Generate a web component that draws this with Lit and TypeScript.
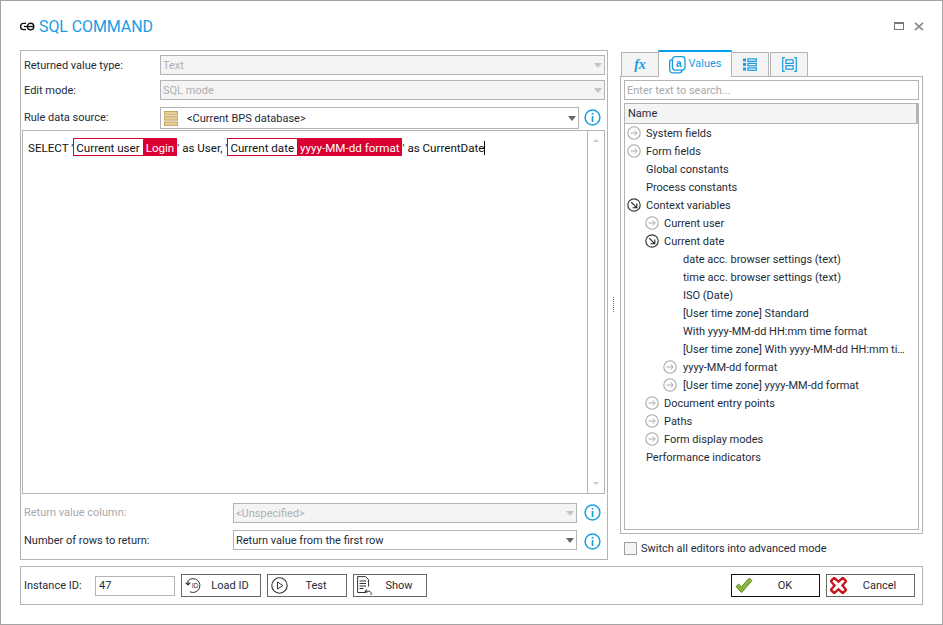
import { LitElement, css, html, svg } from "lit";
import { customElement } from "lit/decorators.js";

type TreeRow = { label: string; level: number; icon?: "closed" | "open" };

const TREE: TreeRow[] = [
  { label: "System fields", level: 0, icon: "closed" },
  { label: "Form fields", level: 0, icon: "closed" },
  { label: "Global constants", level: 0 },
  { label: "Process constants", level: 0 },
  { label: "Context variables", level: 0, icon: "open" },
  { label: "Current user", level: 1, icon: "closed" },
  { label: "Current date", level: 1, icon: "open" },
  { label: "date acc. browser settings (text)", level: 2 },
  { label: "time acc. browser settings (text)", level: 2 },
  { label: "ISO (Date)", level: 2 },
  { label: "[User time zone] Standard", level: 2 },
  { label: "With yyyy-MM-dd HH:mm time format", level: 2 },
  { label: "[User time zone] With yyyy-MM-dd HH:mm time format", level: 2 },
  { label: "yyyy-MM-dd format", level: 2, icon: "closed" },
  { label: "[User time zone] yyyy-MM-dd format", level: 2, icon: "closed" },
  { label: "Document entry points", level: 1, icon: "closed" },
  { label: "Paths", level: 1, icon: "closed" },
  { label: "Form display modes", level: 1, icon: "closed" },
  { label: "Performance indicators", level: 0 },
];

const infoIcon = html`<svg class="info" width="17" height="17" viewBox="0 0 17 17">
  <circle cx="8.5" cy="8.5" r="7.4" fill="none" stroke="#1ba1e2" stroke-width="1.5" />
  <rect x="7.7" y="7" width="1.7" height="6" fill="#1ba1e2" />
  <rect x="7.7" y="3.9" width="1.7" height="1.7" fill="#1ba1e2" />
</svg>`;

const treeClosed = html`<svg width="14" height="14" viewBox="0 0 14 14">
  <circle cx="7" cy="7" r="6.2" fill="none" stroke="#a9a9a9" stroke-width="1.1" />
  <path d="M3.6 7h6.4M7.6 4.4 10.2 7 7.6 9.6" fill="none" stroke="#a9a9a9" stroke-width="1" />
</svg>`;

const treeOpen = html`<svg width="14" height="14" viewBox="0 0 14 14">
  <circle cx="7" cy="7" r="6.2" fill="none" stroke="#3a3a3a" stroke-width="1.2" />
  <path d="M4.2 4.2 9.6 9.6M9.8 5.6v4.2H5.6" fill="none" stroke="#222" stroke-width="1.1" />
</svg>`;

const dbIcon = svg`<rect x="0.5" y="0.5" width="13" height="3.4" fill="#e8cf9a" stroke="#c9a45c" />
  <rect x="0.5" y="5.7" width="13" height="3.4" fill="#e8cf9a" stroke="#c9a45c" />
  <rect x="0.5" y="11" width="13" height="3.4" fill="#e8cf9a" stroke="#c9a45c" />`;

@customElement("app-root")
export class AppRoot extends LitElement {
  renderSelect(text: string, cls = "") {
    return html`<div class="select ${cls}">
      <span class="select-text">${text}</span>
      <span class="arrow"></span>
    </div>`;
  }

  renderTree() {
    return TREE.map(
      (row) => html`<div class="tree-row lvl${row.level}">
        <span class="tree-icon">${row.icon === "open" ? treeOpen : row.icon === "closed" ? treeClosed : ""}</span>
        <span class="tree-label">${row.label}</span>
      </div>`
    );
  }

  render() {
    return html`
      <header class="title-bar">
        <svg class="link-icon" width="15" height="9" viewBox="0 0 15 9">
          <path d="M6 1.4H3.6a3.1 3.1 0 0 0 0 6.2H6" fill="none" stroke="#111" stroke-width="1.4" />
          <circle cx="10.6" cy="4.5" r="3.2" fill="none" stroke="#111" stroke-width="1.4" />
          <path d="M4 4.5h10" stroke="#111" stroke-width="1.3" />
        </svg>
        <h1>SQL COMMAND</h1>
        <span class="spacer"></span>
        <svg class="win-btn" width="10" height="8" viewBox="0 0 10 8">
          <rect x="0.5" y="0.5" width="9" height="7" fill="none" stroke="#777" />
          <path d="M0 1h10" stroke="#777" stroke-width="2" />
        </svg>
        <svg class="win-btn close" width="10" height="9" viewBox="0 0 10 9">
          <path d="M1 .8 9 8.2M9 .8 1 8.2" fill="none" stroke="#888" stroke-width="1.6" />
        </svg>
      </header>

      <div class="main">
        <section class="left">
          <div class="form-row first">
            <label>Returned value type:</label>
            ${this.renderSelect("Text", "disabled")}
          </div>
          <div class="form-row second">
            <label>Edit mode:</label>
            ${this.renderSelect("SQL mode", "disabled")}
          </div>
          <div class="form-row source">
            <label>Rule data source:</label>
            <div class="select tall">
              <svg class="db" width="14" height="15" viewBox="0 0 14 15">${dbIcon}</svg>
              <span class="select-text">&lt;Current BPS database&gt;</span>
              <span class="arrow dark"></span>
            </div>
            ${infoIcon}
          </div>

          <div class="editor">
            <div class="code">SELECT '<span class="chip"><span class="chip-name">Current user</span><span class="chip-value">Login</span></span>' as User, '<span class="chip"><span class="chip-name">Current date</span><span class="chip-value">yyyy-MM-dd format</span></span>' as CurrentDate<span class="caret"></span></div>
            <div class="scrollbar">
              <span class="scroll-up"></span>
              <span class="scroll-down"></span>
            </div>
          </div>

          <div class="form-row lower muted">
            <label>Return value column:</label>
            ${this.renderSelect("<Unspecified>", "disabled")}
            ${infoIcon}
          </div>
          <div class="form-row lower rows">
            <label>Number of rows to return:</label>
            ${this.renderSelect("Return value from the first row")}
            ${infoIcon}
          </div>
        </section>

        <div class="splitter"></div>

        <section class="right">
          <div class="tabs">
            <div class="tab fx">fx</div>
            <div class="tab active">
              <svg width="17" height="18" viewBox="0 0 17 18">
                <rect x="0.7" y="3.4" width="12.4" height="13.4" rx="3" fill="none" stroke="#1b9ce0" stroke-width="1.3" />
                <rect x="3.4" y="0.7" width="12.6" height="13.4" rx="3" fill="#fff" stroke="#1b9ce0" stroke-width="1.3" />
                <text x="9.7" y="11" text-anchor="middle" font-size="10" font-weight="700" fill="#1b9ce0" font-family="Liberation Sans, sans-serif">a</text>
              </svg>
              <span class="tab-label">Values</span>
            </div>
            <div class="tab narrow">
              <svg width="14" height="13" viewBox="0 0 14 13" fill="#1b9ce0">
                <rect x="0" y="0.5" width="3" height="3" />
                <rect x="0" y="5" width="3" height="3" />
                <rect x="0" y="9.5" width="3" height="3" />
                <rect x="4.9" y="0.9" width="8.4" height="2.4" fill="none" stroke="#1b9ce0" stroke-width="1.2" />
                <rect x="4.9" y="5.4" width="8.4" height="2.4" fill="none" stroke="#1b9ce0" stroke-width="1.2" />
                <rect x="4.9" y="9.9" width="8.4" height="2.4" fill="none" stroke="#1b9ce0" stroke-width="1.2" />
              </svg>
            </div>
            <div class="tab wide">
              <svg width="15" height="15" viewBox="0 0 15 15" fill="none" stroke="#1b9ce0" stroke-width="1.2">
                <path d="M2.8.7H.7v13.6h2.1M12.2.7h2.1v13.6h-2.1" />
                <rect x="3.9" y="2.8" width="7.2" height="3.6" />
                <rect x="3.9" y="8.6" width="7.2" height="3.6" />
              </svg>
            </div>
          </div>
          <div class="tab-body">
            <div class="search">Enter text to search...</div>
            <div class="tree">
              <div class="tree-head">Name</div>
              ${this.renderTree()}
            </div>
          </div>
          <div class="advanced">
            <span class="checkbox"></span>
            <span>Switch all editors into advanced mode</span>
          </div>
        </section>
      </div>

      <footer class="footer">
        <label>Instance ID:</label>
        <div class="instance">47</div>
        <button class="btn load">
          <svg width="17" height="17" viewBox="0 0 17 17" fill="none" stroke="#333">
            <path d="M3.4 3.4A6.9 6.9 0 1 1 5 14.8" stroke-width="1" />
            <path d="M0.6 5.6 3 8 5.3 5.6M3 8V3.6" stroke-width="1.1" />
            <text x="10" y="11" text-anchor="middle" font-size="6.5" fill="#333" stroke="none" font-family="Liberation Sans, sans-serif">ID</text>
          </svg>
          <span>Load ID</span>
        </button>
        <button class="btn test">
          <svg width="17" height="17" viewBox="0 0 17 17" fill="none" stroke="#333">
            <circle cx="8.5" cy="8.5" r="7.7" stroke-width="1.1" />
            <path d="M6.5 5 11.8 8.5 6.5 12Z" stroke-width="1" />
          </svg>
          <span>Test</span>
        </button>
        <button class="btn show">
          <svg width="17" height="20" viewBox="0 0 17 20" fill="none" stroke="#333">
            <path d="M9 16.5H.6V.6h8l3 3v7" stroke-width="1" />
            <path d="M2.5 5h6.5M2.5 7.5h6.5M2.5 10h6.5M2.5 12.5h4" stroke-width="1" />
            <path d="M9.6 13.4 8 15.4l2.4 1M8.4 15.2h3.8a2.4 2.4 0 0 1 1.6 3.8" stroke-width="1" />
          </svg>
          <span>Show</span>
        </button>
        <span class="spacer"></span>
        <button class="btn ok">
          <svg width="18" height="17" viewBox="0 0 18 17">
            <path d="M1 9.5 3.6 7l2.8 3L14 1.2 17 3.5 6.6 15.6Z" fill="#8db53c" stroke="#5f8a1e" stroke-width="1" />
          </svg>
          <span>OK</span>
        </button>
        <button class="btn cancel">
          <svg width="17" height="17" viewBox="0 0 17 17">
            <path d="M4.2.8 8.5 4.6 12.8.8 16.2 4.2 12.4 8.5 16.2 12.8 12.8 16.2 8.5 12.4 4.2 16.2.8 12.8 4.6 8.5.8 4.2Z" fill="#fff" stroke="#c8171f" stroke-width="2.4" />
          </svg>
          <span>Cancel</span>
        </button>
      </footer>
    `;
  }

  static styles = css`
    :host {
      display: flex;
      flex-direction: column;
      box-sizing: border-box;
      width: 943px;
      height: 625px;
      padding: 0 19px 0 19px;
      background: #fff;
      border: 1px solid #a3a3a3;
      font-family: Roboto, sans-serif;
      font-size: 11px;
      color: #1d2b3a;
    }
    * {
      box-sizing: border-box;
    }
    .spacer {
      flex: 1;
    }
    label {
      color: #1d2b3a;
    }

    /* title */
    .title-bar {
      display: flex;
      align-items: center;
      height: 49px;
      padding-top: 1px;
    }
    .link-icon {
      margin-right: 4px;
    }
    h1 {
      margin: 0;
      font-size: 16px;
      font-weight: 400;
      letter-spacing: -0.1px;
      color: #1b9ce0;
    }
    .win-btn {
      margin-left: 9px;
    }
    .win-btn.close {
      margin-left: 10px;
      margin-right: -1px;
    }

    /* main columns */
    .main {
      display: flex;
      height: 510px;
    }
    .left {
      display: flex;
      flex-direction: column;
      width: 588px;
      border: 1px solid #b4b4b4;
      padding: 4px 2px 0 1px;
    }
    .form-row {
      display: flex;
      align-items: center;
      padding-left: 2px;
    }
    .form-row label {
      width: 136px;
      flex: none;
    }
    .form-row.second {
      margin-top: 5px;
    }
    .form-row.source {
      margin-top: 7px;
    }
    .form-row.source label {
      margin-bottom: 2px;
    }
    .form-row.lower label {
      width: 209px;
    }
    .form-row.lower {
      margin-top: 9px;
    }
    .form-row.rows {
      margin-top: 7px;
    }
    .form-row.muted label {
      color: #a9a9a9;
      margin-bottom: 2px;
    }
    .info {
      flex: none;
      margin-left: 7px;
      margin-right: 4px;
    }
    .form-row.source .info {
      margin-left: 5px;
      margin-bottom: 2px;
    }
    .form-row.muted .info {
      margin-bottom: 2px;
    }
    .form-row.rows .info {
      margin-top: 2px;
    }
    .select {
      flex: 1;
      display: flex;
      align-items: center;
      height: 20px;
      padding: 0 1px 0 2px;
      border: 1px solid #b4b4b4;
      background: #fff;
      min-width: 0;
    }
    .select.disabled {
      background: #f4f4f4;
      color: #b0b0b0;
    }
    .select.tall {
      height: 22px;
    }
    .select-text {
      flex: 1;
    }
    .db {
      margin: 0 9px 0 1px;
    }
    .arrow {
      width: 0;
      height: 0;
      margin-right: 1px;
      border-left: 4px solid transparent;
      border-right: 4px solid transparent;
      border-top: 5px solid #c4c4c4;
    }
    .form-row .select:not(.disabled) .arrow {
      border-top-color: #666;
    }

    /* editor */
    .editor {
      flex: none;
      display: flex;
      height: 364px;
      margin-top: 1px;
      border: 1px solid #b4b4b4;
    }
    .code {
      flex: 1;
      padding: 8px 0 0 5px;
      white-space: pre;
      color: #111;
      font-size: 11.6px;
      line-height: 18px;
    }
    .chip {
      display: inline-flex;
      height: 18px;
      margin-top: -1px;
      line-height: 18px;
      border: 1px solid #dc0032;
      vertical-align: top;
    }
    .chip-name {
      padding: 0 3px 0 2px;
      color: #111;
    }
    .chip-value {
      padding: 0 2px 0 3px;
      color: #fff;
      background: #dc0032;
    }
    .caret {
      display: inline-block;
      width: 1px;
      height: 14px;
      background: #000;
      vertical-align: -3px;
    }
    .scrollbar {
      flex: none;
      display: flex;
      flex-direction: column;
      justify-content: space-between;
      align-items: center;
      width: 17px;
      padding: 8px 0;
      border-left: 1px solid #b4b4b4;
    }
    .scroll-up,
    .scroll-down {
      width: 0;
      height: 0;
      border-left: 3px solid transparent;
      border-right: 3px solid transparent;
    }
    .scroll-up {
      border-bottom: 3px solid #c8c8c8;
    }
    .scroll-down {
      border-top: 3px solid #c8c8c8;
    }

    .splitter {
      flex: none;
      width: 12px;
      position: relative;
    }
    .splitter::after {
      content: "";
      position: absolute;
      left: 5px;
      top: 247px;
      height: 15px;
      border-left: 1px dotted #777;
    }

    /* right side */
    .right {
      flex: none;
      width: 303px;
      display: flex;
      flex-direction: column;
    }
    .tabs {
      display: flex;
      height: 26px;
      align-items: flex-end;
      padding-left: 1px;
    }
    .tab {
      display: flex;
      align-items: center;
      justify-content: center;
      gap: 3px;
      height: 24px;
      border: 1px solid #b4b4b4;
      border-bottom: none;
      background: #f4f4f4;
    }
    .tab.fx {
      width: 37px;
      font: italic 700 14px "Liberation Serif", serif;
      color: #1b9ce0;
      border-right: none;
    }
    .tab.active {
      width: 74px;
      border-top: 2px solid #00a2ed;
      background: #fff;
      color: #1b9ce0;
      margin-bottom: -1px;
      height: 27px;
      position: relative;
    }
    .tab-label {
      margin-bottom: 2px;
    }
    .tab.narrow {
      width: 37px;
      border-left: none;
    }
    .tab.wide {
      width: 38px;
      margin-left: 1px;
    }
    .tab-body {
      height: 458px;
      border: 1px solid #b4b4b4;
      padding: 3px;
      display: flex;
      flex-direction: column;
    }
    .search {
      height: 20px;
      line-height: 19px;
      padding-left: 2px;
      border: 1px solid #b4b4b4;
      color: #a9a9a9;
    }
    .tree {
      flex: 1;
      margin-top: 3px;
      border: 1px solid #b4b4b4;
      overflow: hidden;
    }
    .tree-head {
      height: 20px;
      line-height: 19px;
      padding-left: 3px;
      background: #f4f4f4;
      border-bottom: 1px solid #b4b4b4;
      border-right: 2px solid #b4b4b4;
    }
    .tree-row {
      display: flex;
      align-items: center;
      height: 18px;
    }
    .tree-row.lvl0 {
      padding-left: 2px;
    }
    .tree-row.lvl1 {
      padding-left: 20px;
    }
    .tree-row.lvl2 {
      padding-left: 38px;
    }
    .tree-icon {
      display: flex;
      flex: none;
      width: 18px;
      margin-right: 1px;
    }
    .tree-row.lvl2 .tree-icon {
      margin-right: 2px;
    }
    .tree-label {
      flex: 1;
      min-width: 0;
      white-space: nowrap;
      overflow: hidden;
      text-overflow: ellipsis;
      padding-right: 6px;
    }
    .advanced {
      display: flex;
      align-items: center;
      gap: 4px;
      padding: 8px 0 0 4px;
    }
    .checkbox {
      width: 13px;
      height: 13px;
      border: 1px solid #a0a0a0;
      background: #f4f4f4;
    }

    /* footer */
    .footer {
      flex: none;
      display: flex;
      align-items: center;
      height: 39px;
      margin-top: 6px;
      padding: 0 7px 0 3px;
      border: 1px solid #b4b4b4;
    }
    .footer label {
      width: 71px;
    }
    .instance {
      width: 80px;
      height: 20px;
      line-height: 18px;
      padding-left: 3px;
      border: 1px solid #b4b4b4;
    }
    .btn {
      display: flex;
      align-items: center;
      height: 23px;
      margin-left: 6px;
      padding: 0 0 0 3px;
      background: #fff;
      border: 1px solid #666;
      font: inherit;
      color: inherit;
    }
    .btn svg {
      flex: none;
    }
    .btn span {
      flex: 1;
      text-align: center;
      padding-right: 2px;
    }
    .btn.load,
    .btn.test {
      width: 80px;
    }
    .btn.show {
      width: 74px;
    }
    .btn.ok,
    .btn.cancel {
      width: 89px;
    }
    .btn.ok {
      border-color: #111;
    }
  `;
}
